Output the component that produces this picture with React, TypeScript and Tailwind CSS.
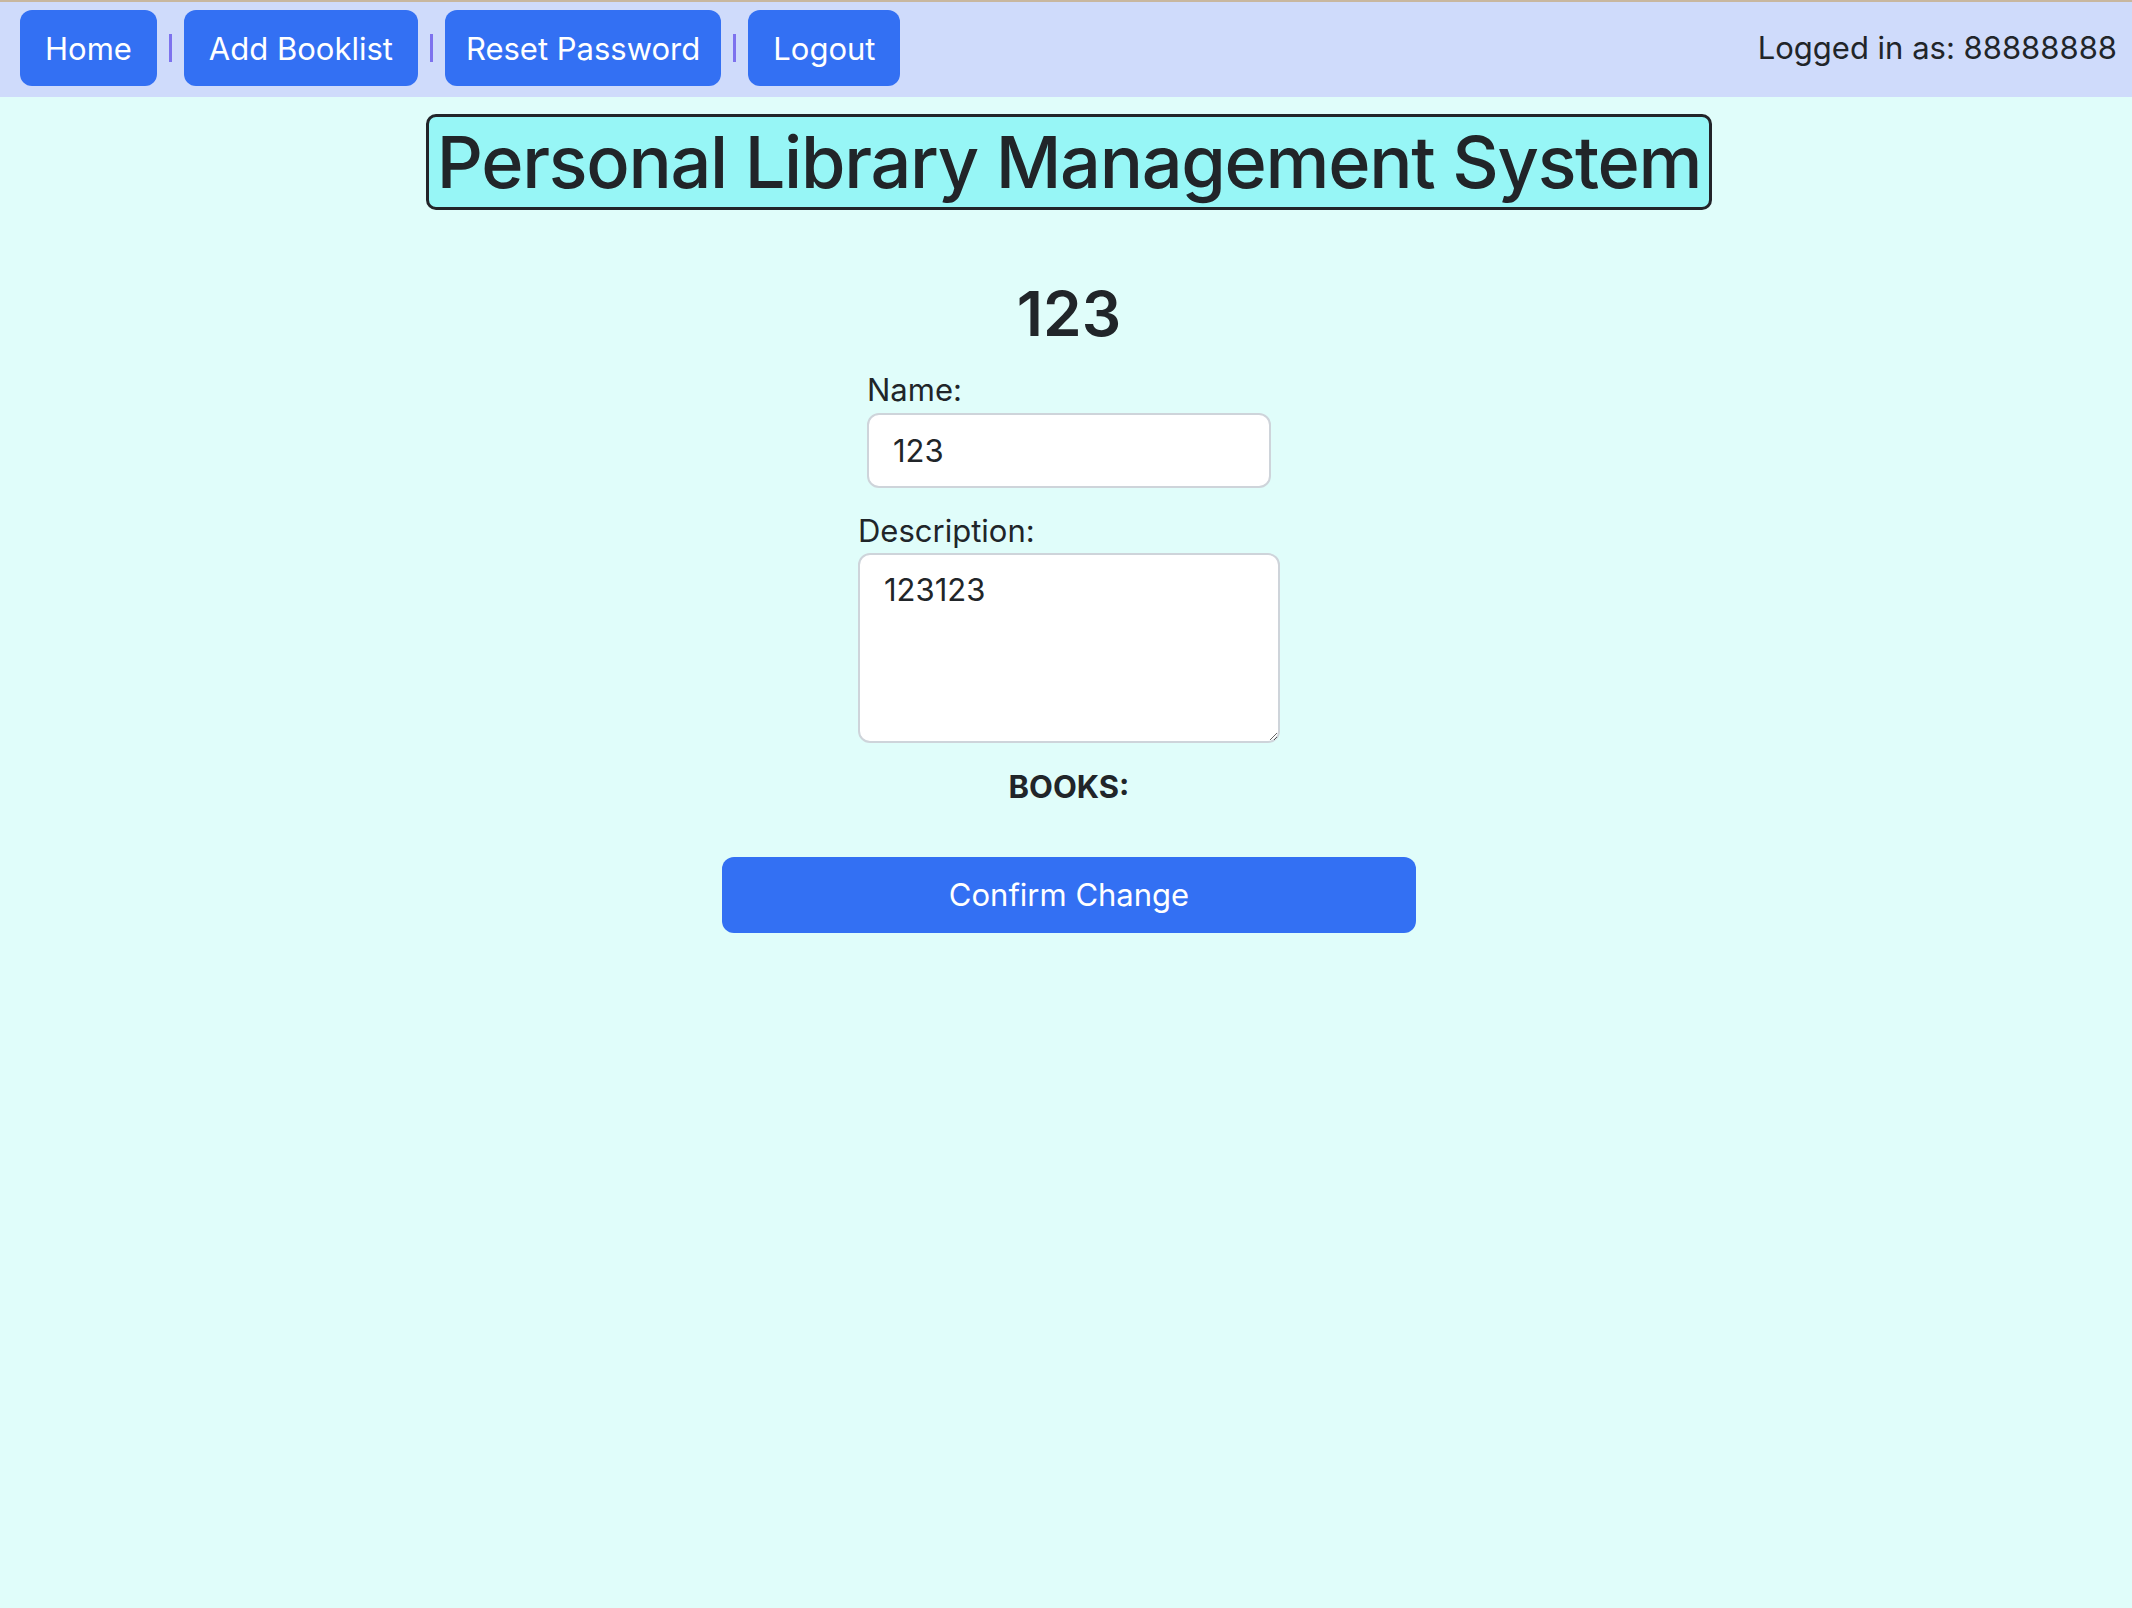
import { useState } from "react";

const font = { fontFamily: "Inter, 'Noto Sans', sans-serif" };

function NavButton({ label, px = "px-[25px]" }: { label: string; px?: string }) {
  return (
    <button className={`h-[76px] ${px} rounded-[12px] bg-[#3370f3] text-white text-[31px] leading-none`}>
      {label}
    </button>
  );
}

function Sep() {
  return <div className="w-[3px] h-[28px] bg-[#7d72ee] mx-[12px]" />;
}

export default function App() {
  const [name, setName] = useState("123");
  const [desc, setDesc] = useState("123123");
  return (
    <div className="min-h-[1608px] bg-[#e0fdfa] text-[#212529]" style={font}>
      <nav className="flex items-center justify-between bg-[#cfdbfb] border-t-[2px] border-[#c8b79f] pl-[20px] pr-[15px] pt-[8px] pb-[11px]">
        <div className="flex items-center">
          <NavButton label="Home" />
          <Sep />
          <NavButton label="Add Booklist" />
          <Sep />
          <NavButton label="Reset Password" px="px-[21px]" />
          <Sep />
          <NavButton label="Logout" />
        </div>
        <div className="text-[31px]">Logged in as: 88888888</div>
      </nav>

      <div className="flex flex-col items-center pl-[6px]">
        <h1 className="mt-[17px] border-[3px] border-[#222429] rounded-[10px] bg-[#97f6f6] px-[8px] h-[96px] flex items-center text-[72px] font-medium tracking-[-1.3px]">
          Personal Library Management System
        </h1>

        <h2 className="mt-[66px] text-[62px] font-semibold leading-[76px]">123</h2>

        <div className="flex flex-col items-start mt-[18px]">
          <label className="text-[31px] leading-[40px]">Name:</label>
          <input
            value={name}
            onChange={(e) => setName(e.target.value)}
            className="mt-[3px] w-[404px] h-[75px] bg-white border-[2px] border-[#ced4da] rounded-[12px] px-[24px] text-[31px] outline-none"
          />
        </div>

        <div className="flex flex-col items-start mt-[23px]">
          <label className="text-[31px] leading-[40px]">Description:</label>
          <textarea
            value={desc}
            onChange={(e) => setDesc(e.target.value)}
            className="mt-[2px] w-[422px] h-[190px] bg-white border-[2px] border-[#ced4da] rounded-[12px] px-[24px] py-[12px] text-[31px] leading-[46px] outline-none"
          />
        </div>

        <div className="mt-[24px] text-[31px] font-bold leading-[40px]">BOOKS:</div>

        <button className="mt-[50px] w-[694px] h-[76px] rounded-[12px] bg-[#3370f3] text-white text-[31px]">
          Confirm Change
        </button>
      </div>
    </div>
  );
}
